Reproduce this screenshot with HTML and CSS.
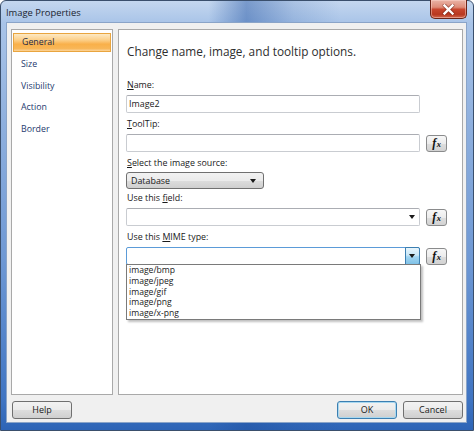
FILE: index.html
```html
<!DOCTYPE html>
<html>
<head>
<meta charset="utf-8">
<link rel="stylesheet" href="styles.css">
</head>
<body>
<div class="window">
  <div class="titlebar">
    <span class="title">Image Properties</span>
    <div class="close">
      <svg width="13" height="11" viewBox="0 0 13 11">
        <path d="M2.5 1.5 L10.5 9.5 M10.5 1.5 L2.5 9.5" stroke="#5a1a10" stroke-width="4" stroke-linecap="round" opacity="0.45"/>
        <path d="M2.5 1.5 L10.5 9.5 M10.5 1.5 L2.5 9.5" stroke="#ffffff" stroke-width="2.4" stroke-linecap="square"/>
      </svg>
    </div>
  </div>
  <div class="client">
    <div class="panels">
      <div class="nav">
        <div class="nav-item active">General</div>
        <div class="nav-item">Size</div>
        <div class="nav-item">Visibility</div>
        <div class="nav-item">Action</div>
        <div class="nav-item">Border</div>
      </div>
      <div class="content">
        <div class="heading">Change name, image, and tooltip options.</div>

        <div class="group">
          <div class="label"><u>N</u>ame:</div>
          <div class="row"><div class="textbox">Image2</div></div>
        </div>

        <div class="group">
          <div class="label"><u>T</u>oolTip:</div>
          <div class="row"><div class="textbox"></div><div class="fx">f<span>x</span></div></div>
        </div>

        <div class="group tight">
          <div class="label"><u>S</u>elect the image source:</div>
          <div class="row"><div class="select">Database<span class="arrow"></span></div></div>
        </div>

        <div class="group">
          <div class="label">Use this <u>f</u>ield:</div>
          <div class="row"><div class="combo"><span class="arrow"></span></div><div class="fx">f<span>x</span></div></div>
        </div>

        <div class="group">
          <div class="label">Use this <u>M</u>IME type:</div>
          <div class="row">
            <div class="combo focused">
              <div class="dropbtn"><span class="arrow"></span></div>
              <div class="list">
                <div class="list-item">image/bmp</div>
                <div class="list-item">image/jpeg</div>
                <div class="list-item">image/gif</div>
                <div class="list-item">image/png</div>
                <div class="list-item">image/x-png</div>
              </div>
            </div>
            <div class="fx">f<span>x</span></div>
          </div>
        </div>
      </div>
    </div>
    <div class="buttons">
      <div class="btn">Help</div>
      <div class="spacer"></div>
      <div class="btn default">OK</div>
      <div class="btn">Cancel</div>
    </div>
  </div>
</div>
</body>
</html>
```

FILE: styles.css
```css
* { box-sizing: border-box; }
html, body { margin: 0; padding: 0; }
body {
  width: 474px;
  height: 431px;
  overflow: hidden;
  font-family: "Open Sans", "DejaVu Sans", sans-serif;
  background: #ffffff;
}
.window {
  width: 474px;
  height: 431px;
  display: flex;
  flex-direction: column;
  background:
    linear-gradient(90deg, rgba(255,255,255,0) 0%, rgba(255,255,255,0) 44%, rgba(30,80,160,0.45) 52%, rgba(30,80,160,0.15) 62%, rgba(255,255,255,0) 72%),
    linear-gradient(180deg, #c4d7ef 0px, #a9c4e8 22px, #8fb0de 120px, #6e98d4 260px, #3f74c2 400px, #2c63b5 431px);
  border: 1px solid #3a4f6c;
  border-radius: 6px 6px 0 0;
}
.titlebar {
  height: 21px;
  display: flex;
  align-items: flex-start;
}
.title {
  font-size: 9.4px;
  color: #1b2430;
  padding-left: 5px;
  padding-top: 4px;
  line-height: 16px;
}
.close {
  margin-left: auto;
  margin-right: 6px;
  margin-top: -1px;
  width: 37px;
  height: 19px;
  border: 1px solid #6b2418;
  border-top: none;
  border-radius: 0 0 5px 5px;
  background: linear-gradient(180deg, #eab3a6 0%, #de8c78 40%, #c8462e 52%, #b83820 80%, #d2664c 100%);
  display: flex;
  align-items: center;
  justify-content: center;
  box-shadow: inset 0 0 0 1px rgba(255,220,210,0.45);
}
.client {
  flex: 1;
  margin: 0 6px 7px 5px;
  background: #f0f0f0;
  border: 1px solid #8aa4c8;
  padding: 6px 3px 0 4px;
  display: flex;
  flex-direction: column;
}
.panels {
  height: 366px;
  display: flex;
  gap: 5px;
}
.nav {
  width: 102px;
  background: #ffffff;
  border: 1px solid #a9a9a9;
  padding: 3px 1px 0 1px;
}
.nav-item {
  height: 19px;
  margin-bottom: 2.75px;
  font-size: 8.8px;
  line-height: 19px;
  padding-left: 8px;
  color: #1e3a6e;
}
.nav-item.active {
  background: linear-gradient(180deg, #fde9c4 0%, #fcd08a 35%, #f9b04a 60%, #f8b657 85%, #fbd49a 100%);
  border: 1px solid #e9a53f;
  line-height: 17px;
  color: #1e2a44;
}
.content {
  flex: 1;
  background: #ffffff;
  border: 1px solid #a9a9a9;
  padding: 0 0 0 7px;
}
.heading {
  font-size: 11.8px;
  color: #2e2e2e;
  line-height: 20px;
  margin-top: 11px;
  padding-left: 1px;
  margin-bottom: 17px;
}
.group { margin-bottom: 4px; }
.group.tight { margin-bottom: 2px; }
.group.tight .label { margin-bottom: 1px; }
.label {
  font-size: 8.9px;
  line-height: 14px;
  color: #1a1a1a;
  padding-left: 1px;
  margin-bottom: 3px;
}
.label u { text-underline-offset: 1px; }
.row {
  display: flex;
  align-items: center;
  gap: 6px;
  height: 18px;
}
.textbox {
  width: 294px;
  height: 18px;
  border: 1px solid #c9ccd1;
  border-top-color: #abadb3;
  border-radius: 2px;
  background: #ffffff;
  font-size: 8.9px;
  line-height: 16px;
  padding-left: 2px;
  color: #1a1a1a;
}
.fx {
  width: 21px;
  height: 17px;
  border: 1px solid #8a8b8c;
  border-radius: 3px;
  background: linear-gradient(180deg, #f7f7f7 0%, #ececec 50%, #dedede 51%, #d2d2d2 100%);
  font-family: "Liberation Serif", "DejaVu Serif", serif;
  font-style: italic;
  font-weight: bold;
  font-size: 12px;
  line-height: 15px;
  text-align: center;
  color: #111;
}
.fx span { font-size: 8.5px; margin-left: 0.5px; }
.select {
  position: relative;
  width: 138px;
  height: 17px;
  border: 1px solid #707070;
  border-radius: 3px;
  background: linear-gradient(180deg, #f2f2f2 0%, #ebebeb 50%, #dddddd 51%, #cfcfcf 100%);
  font-size: 8.9px;
  line-height: 15px;
  padding-left: 4px;
  color: #1a1a1a;
}
.arrow {
  position: absolute;
  width: 0;
  height: 0;
  border-left: 3.5px solid transparent;
  border-right: 3.5px solid transparent;
  border-top: 4px solid #1a1a1a;
}
.select .arrow { right: 7px; top: 6px; }
.combo {
  position: relative;
  width: 294px;
  height: 18px;
  border: 1px solid #c9ccd1;
  border-top-color: #abadb3;
  border-radius: 2px;
  background: #ffffff;
}
.combo > .arrow { right: 4px; top: 6px; }
.combo.focused {
  border-color: #5b9bd8;
}
.dropbtn {
  position: absolute;
  right: -1px;
  top: -1px;
  width: 15px;
  height: 18px;
  border: 1px solid #3c7fb1;
  border-radius: 0 2px 2px 0;
  background: linear-gradient(180deg, #e8f5fc 0%, #c9e7f7 45%, #a2d5f1 55%, #7fc1e6 100%);
}
.dropbtn .arrow { left: 3px; top: 6px; }
.list {
  position: absolute;
  left: -1px;
  top: 16px;
  width: 295px;
  border: 1px solid #7a7a7a;
  background: #ffffff;
  box-shadow: 2px 2px 2px rgba(0,0,0,0.25);
  padding: 0;
  z-index: 5;
}
.list-item {
  font-size: 8.6px;
  line-height: 10.8px;
  padding-left: 2px;
  color: #1a1a1a;
}
.buttons {
  display: flex;
  align-items: center;
  gap: 6px;
  margin-top: 6px;
  padding: 0 0 0 1px;
}
.spacer { flex: 1; }
.btn {
  width: 60px;
  height: 18px;
  border: 1px solid #707070;
  border-radius: 3px;
  background: linear-gradient(180deg, #f2f2f2 0%, #ebebeb 50%, #dddddd 51%, #cfcfcf 100%);
  font-size: 9px;
  line-height: 16px;
  text-align: center;
  color: #1a1a1a;
}
.btn.default {
  border-color: #3c7fb1;
  box-shadow: inset 0 0 0 1px #a8d8f0;
}
```
